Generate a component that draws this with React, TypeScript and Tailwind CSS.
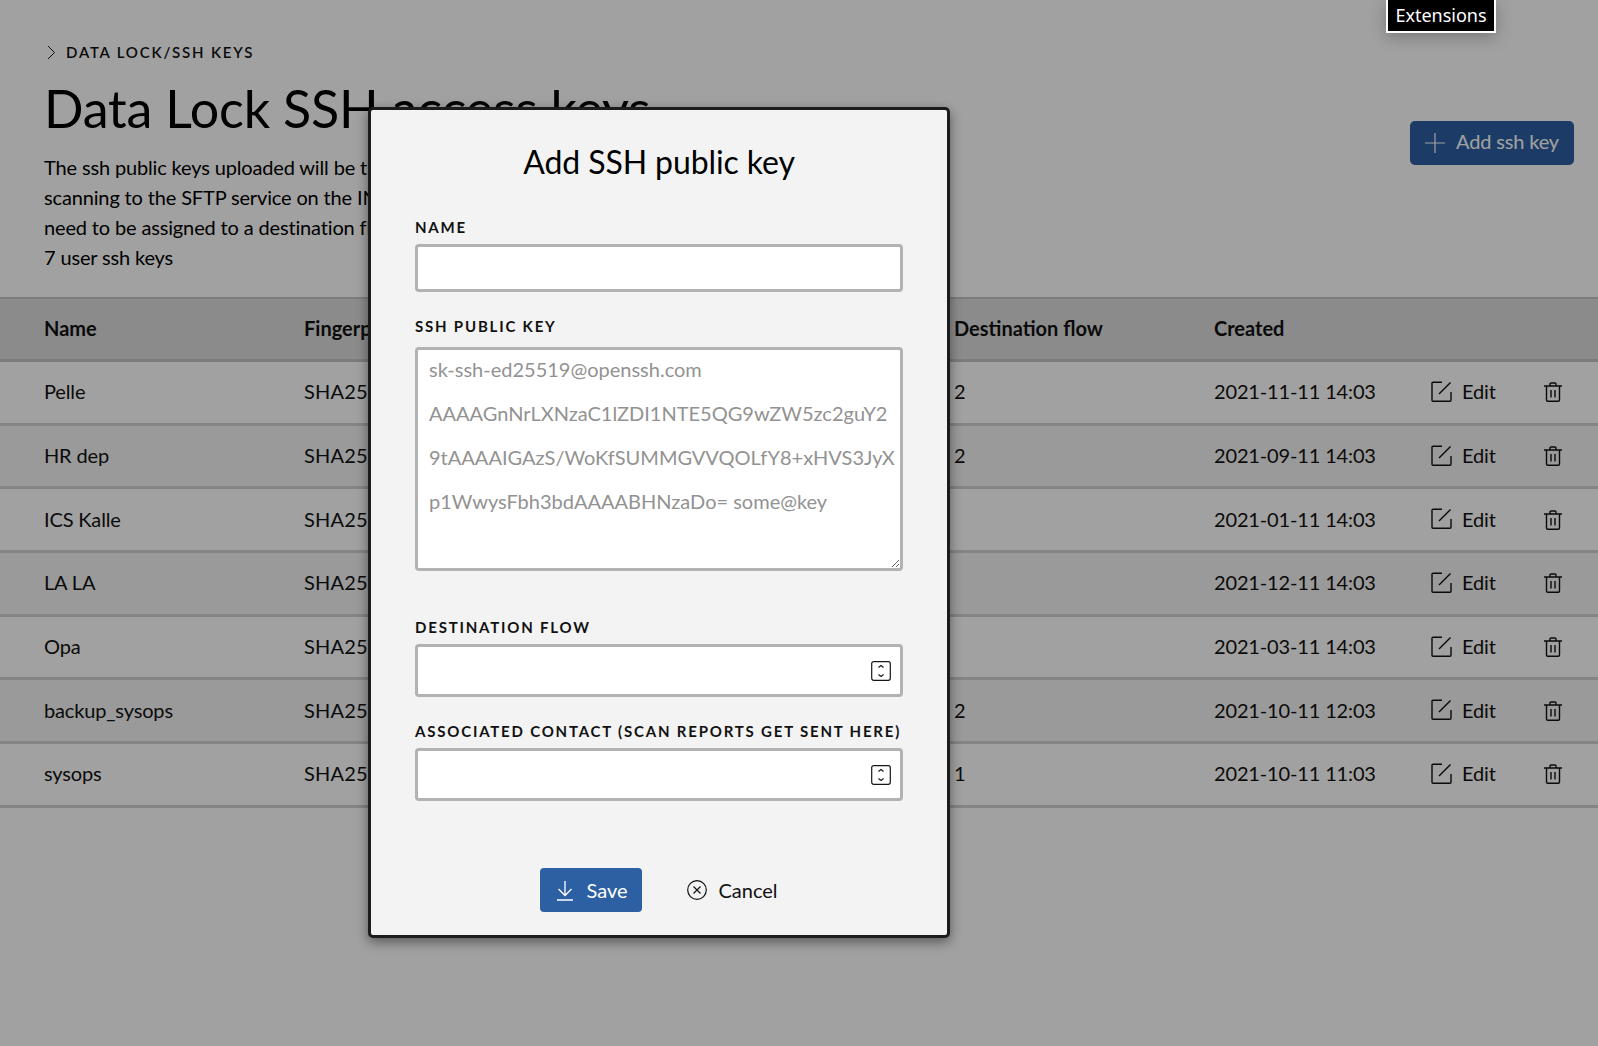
const keys = [
  { name: "Pelle", flow: "2", created: "2021-11-11 14:03" },
  { name: "HR dep", flow: "2", created: "2021-09-11 14:03" },
  { name: "ICS Kalle", flow: "", created: "2021-01-11 14:03" },
  { name: "LA LA", flow: "", created: "2021-12-11 14:03" },
  { name: "Opa", flow: "", created: "2021-03-11 14:03" },
  { name: "backup_sysops", flow: "2", created: "2021-10-11 12:03" },
  { name: "sysops", flow: "1", created: "2021-10-11 11:03" },
];

const placeholder = `sk-ssh-ed25519@openssh.com
AAAAGnNrLXNzaC1lZDI1NTE5QG9wZW5zc2guY2
9tAAAAIGAzS/WoKfSUMMGVVQOLfY8+xHVS3JyX
p1WwysFbh3bdAAAABHNzaDo= some@key`;

function EditIcon() {
  return (
    <svg width="21" height="21" viewBox="0 0 21 21" fill="none" stroke="currentColor" strokeWidth="1.4">
      <path d="M20 11v8.300a1 1 0 0 1-1 1H2a1 1 0 0 1-1-1V2.200a1 1 0 0 1 1-1h9" />
      <path d="M8 13 19.500 1.500" />
    </svg>
  );
}

function TrashIcon() {
  return (
    <svg width="18" height="20" viewBox="0 0 18 20" fill="none" stroke="currentColor" strokeWidth="1.4" className="mt-[2px]">
      <path d="M0 4h18M6 4V2a1 1 0 0 1 1-1h4a1 1 0 0 1 1 1v2" />
      <path d="M2.500 4v14a1.200 1.200 0 0 0 1.200 1.200h10.600a1.200 1.200 0 0 0 1.200-1.200V4" />
      <path d="M7 8v7.500M11 8v7.500" />
    </svg>
  );
}

function StepperIcon() {
  return (
    <svg width="20" height="20" viewBox="0 0 20 20" fill="none" stroke="#161616" strokeWidth="1.2">
      <rect x="0.700" y="0.700" width="18.600" height="18.600" rx="2" />
      <path d="m7.500 6.500 2.500-2 2.500 2M7.500 13.500l2.500 2 2.500-2" />
    </svg>
  );
}

function Field({ label, height, select }: { label: string; height: string; select?: boolean }) {
  return (
    <div>
      <label className="block whitespace-nowrap text-[15px] leading-[20px] font-bold tracking-[0.12em] uppercase text-[#111]">
        {label}
      </label>
      <div
        className={`mt-[7px] flex items-center justify-end pr-[9px] bg-white border-[3px] border-[#b2b2b2] rounded-[4px] ${height}`}
      >
        {select && <StepperIcon />}
      </div>
    </div>
  );
}

export default function App() {
  return (
    <div className="relative h-[1046px] overflow-hidden bg-white text-[#111] [font-family:Lato,sans-serif]">
      <header className="flex justify-between pl-[44px] pr-[24px] pt-[42px] h-[297px]">
        <div>
          <div className="flex items-center gap-[10px] text-[15px] leading-[20px] font-semibold tracking-[0.12em] uppercase">
            <svg width="9" height="15" viewBox="0 0 9 15" fill="none" stroke="currentColor" strokeWidth="1" className="ml-[3px]">
              <path d="m1 1 6.500 6.500L1 14" />
            </svg>
            Data Lock/SSH Keys
          </div>
          <h1 className="mt-[14px] text-[52px] leading-[64px] tracking-[-0.2px] text-black">Data Lock SSH access keys</h1>
          <p className="mt-[12px] text-[20px] leading-[30px] tracking-[-0.15px] text-black">
            The ssh public keys uploaded will be the ones allowed for
            <br />
            scanning to the SFTP service on the INTERNET side, they
            <br />
            need to be assigned to a destination flow to be used.
            <br />7 user ssh keys
          </p>
        </div>
        <button className="mt-[79px] flex items-center gap-[11px] h-[44px] w-[164px] pl-[15px] rounded-[5px] bg-[#2d5fa3] text-white text-[20px] tracking-[-0.15px]">
          <svg width="20" height="20" viewBox="0 0 20 20" fill="none" stroke="currentColor" strokeWidth="1.2">
            <path d="M10 0v20M0 10h20" />
          </svg>
          <span className="pb-[4px]">Add ssh key</span>
        </button>
      </header>

      <div className="text-[20px] tracking-[-0.15px]">
        <div className="grid grid-cols-[260px_650px_260px_1fr] items-center h-[65px] pl-[44px] pb-[2px] bg-[#dcdcdc] border-t-2 border-b-[3px] border-[#c4c4c4] font-bold tracking-normal">
          <div>Name</div>
          <div>Fingerprint</div>
          <div>Destination flow</div>
          <div>Created</div>
        </div>
        {keys.map((key, i) => (
          <div
            key={key.name}
            className={`grid grid-cols-[260px_650px_260px_217px_113px_1fr] items-center h-[63.700px] pl-[44px] pb-[2px] border-b-[3px] border-[#d2d2d2] ${
              i % 2 === 1 ? "bg-[#f4f4f4]" : "bg-white"
            }`}
          >
            <div>{key.name}</div>
            <div className="tracking-[0.2px]">SHA256:Cl8pJf2kQm</div>
            <div>{key.flow}</div>
            <div>{key.created}</div>
            <div className="flex items-center gap-[10px]">
              <EditIcon />
              Edit
            </div>
            <div>
              <TrashIcon />
            </div>
          </div>
        ))}
      </div>

      {/* modal overlay */}
      <div className="absolute inset-0 bg-black/37">
        <div className="absolute right-[102px] top-0 w-[110px] h-[33px] flex items-center justify-center pb-[1px] bg-black border-2 border-t-0 border-white text-white text-[18px] [font-family:'Noto_Sans',sans-serif] shadow-[0_4px_16px_rgba(0,0,0,0.25)]">
          Extensions
        </div>

        <div className="absolute left-[368px] top-[107px] w-[582px] h-[831px] px-[44px] bg-[#f3f3f3] border-[3px] border-[#1c1c1c] rounded-[5px] shadow-[0_4px_12px_rgba(0,0,0,0.45)]">
          <h2 className="mt-[29px] text-center text-[32px] leading-[46px] tracking-[-0.1px] text-black">Add SSH public key</h2>
          <div className="mt-[32px]">
            <Field label="Name" height="h-[48px]" />
          </div>
          <div className="mt-[24px]">
            <label className="block text-[15px] leading-[20px] font-bold tracking-[0.12em] uppercase text-[#111]">
              SSH public key
            </label>
            <textarea
              className="mt-[11px] block w-full h-[224px] px-[11px] bg-white border-[3px] border-[#b2b2b2] rounded-[4px] text-[20px] leading-[44px] placeholder:relative placeholder:top-[-3px] placeholder:text-[#929292]"
              placeholder={placeholder}
              wrap="off"
            />
          </div>
          <div className="mt-[46px]">
            <Field label="Destination flow" height="h-[53px]" select />
          </div>
          <div className="mt-[24px]">
            <Field label="Associated contact (scan reports get sent here)" height="h-[53px]" select />
          </div>
          <div className="mt-[67px] flex items-center justify-center gap-[45px]">
            <button className="flex items-center gap-[13px] h-[44px] w-[102px] pl-[17px] rounded-[4px] bg-[#2d5fa3] text-white text-[20px]">
              <svg width="16" height="21" viewBox="0 0 16 21" fill="none" stroke="currentColor" strokeWidth="1.3">
                <path d="M8 1v14M1.500 9 8 15.500 14.500 9M0 20h16" />
              </svg>
              Save
            </button>
            <button className="flex items-center gap-[11px] text-[20px] text-[#111]">
              <svg width="20" height="20" viewBox="0 0 20 20" fill="none" stroke="currentColor" strokeWidth="1.2">
                <circle cx="10" cy="10" r="9.300" />
                <path d="m6.500 6.500 7 7M13.500 6.500l-7 7" />
              </svg>
              Cancel
            </button>
          </div>
        </div>
      </div>
    </div>
  );
}
